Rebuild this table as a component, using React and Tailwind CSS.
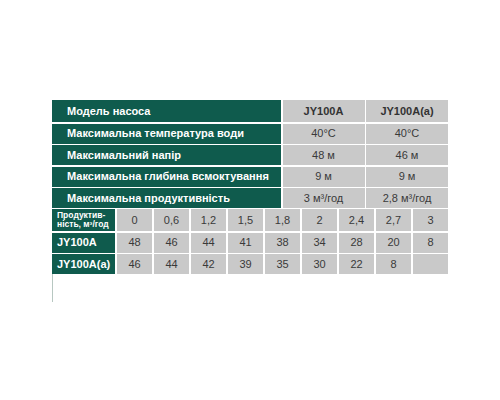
const specs = [
  { label: "Максимальна температура води", a: "40°C", b: "40°C" },
  { label: "Максимальний напір", a: "48 м", b: "46 м" },
  { label: "Максимальна глибина всмоктування", a: "9 м", b: "9 м" },
  { label: "Максимальна продуктивність", a: "3 м³/год", b: "2,8 м³/год" },
];

const flow = ["0", "0,6", "1,2", "1,5", "1,8", "2", "2,4", "2,7", "3"];

const heads = [
  { model: "JY100A", values: ["48", "46", "44", "41", "38", "34", "28", "20", "8"] },
  { model: "JY100A(a)", values: ["46", "44", "42", "39", "35", "30", "22", "8", ""] },
];

const App = () => {
  return (
    <div className="w-[500px] h-[400px] bg-white pt-[100px] pl-[52px] font-['Liberation_Sans',Arial,sans-serif]">
      {/* Main specs */}
      <div className="grid grid-cols-[229px_82px_82px] gap-[1.5px] w-[396px]">
        <div className="h-[22px] bg-[#0f5b4d] text-white font-bold text-[11px] flex items-center pl-[15px]">
          Модель насоса
        </div>
        <div className="h-[22px] bg-[#c9c9c9] text-[#333] font-bold text-[11px] flex items-center justify-center">
          JY100A
        </div>
        <div className="h-[22px] bg-[#c9c9c9] text-[#333] font-bold text-[11px] flex items-center justify-center">
          JY100A(a)
        </div>
        {specs.map((row, idx) => (
          <div key={idx} className="contents">
            <div className="h-[20px] bg-[#0f5b4d] text-white font-bold text-[11px] flex items-center pl-[15px] whitespace-nowrap">
              {row.label}
            </div>
            <div className="h-[20px] bg-[#c9c9c9] text-[#3a3a3a] text-[11px] flex items-center justify-center">
              {row.a}
            </div>
            <div className="h-[20px] bg-[#c9c9c9] text-[#3a3a3a] text-[11px] flex items-center justify-center">
              {row.b}
            </div>
          </div>
        ))}
      </div>

      {/* Flow / head table */}
      <div className="grid grid-cols-[63px_repeat(9,35px)] gap-x-[2px] gap-y-[1.5px] w-[396px] mt-[1px]">
        <div className="h-[22px] bg-[#0f5b4d] text-white font-bold text-[8.5px] leading-[9px] flex flex-col justify-center pl-[5px]">
          <span>Продуктив-</span>
          <span>ність, м³/год</span>
        </div>
        {flow.map((v, i) => (
          <div key={i} className="h-[22px] bg-[#c9c9c9] text-[#3a3a3a] text-[11px] flex items-center justify-center">
            {v}
          </div>
        ))}
        {heads.map((row, idx) => (
          <div key={idx} className="contents">
            <div className="h-[20px] bg-[#0f5b4d] text-white font-bold text-[11px] flex items-center pl-[5px]">
              {row.model}
            </div>
            {row.values.map((v, i) => (
              <div key={i} className="h-[20px] bg-[#c9c9c9] text-[#3a3a3a] text-[11px] flex items-center justify-center">
                {v}
              </div>
            ))}
          </div>
        ))}
      </div>

      <div className="w-px h-[28px] bg-[#b7c7c1]"></div>
    </div>
  );
};

export default App;
